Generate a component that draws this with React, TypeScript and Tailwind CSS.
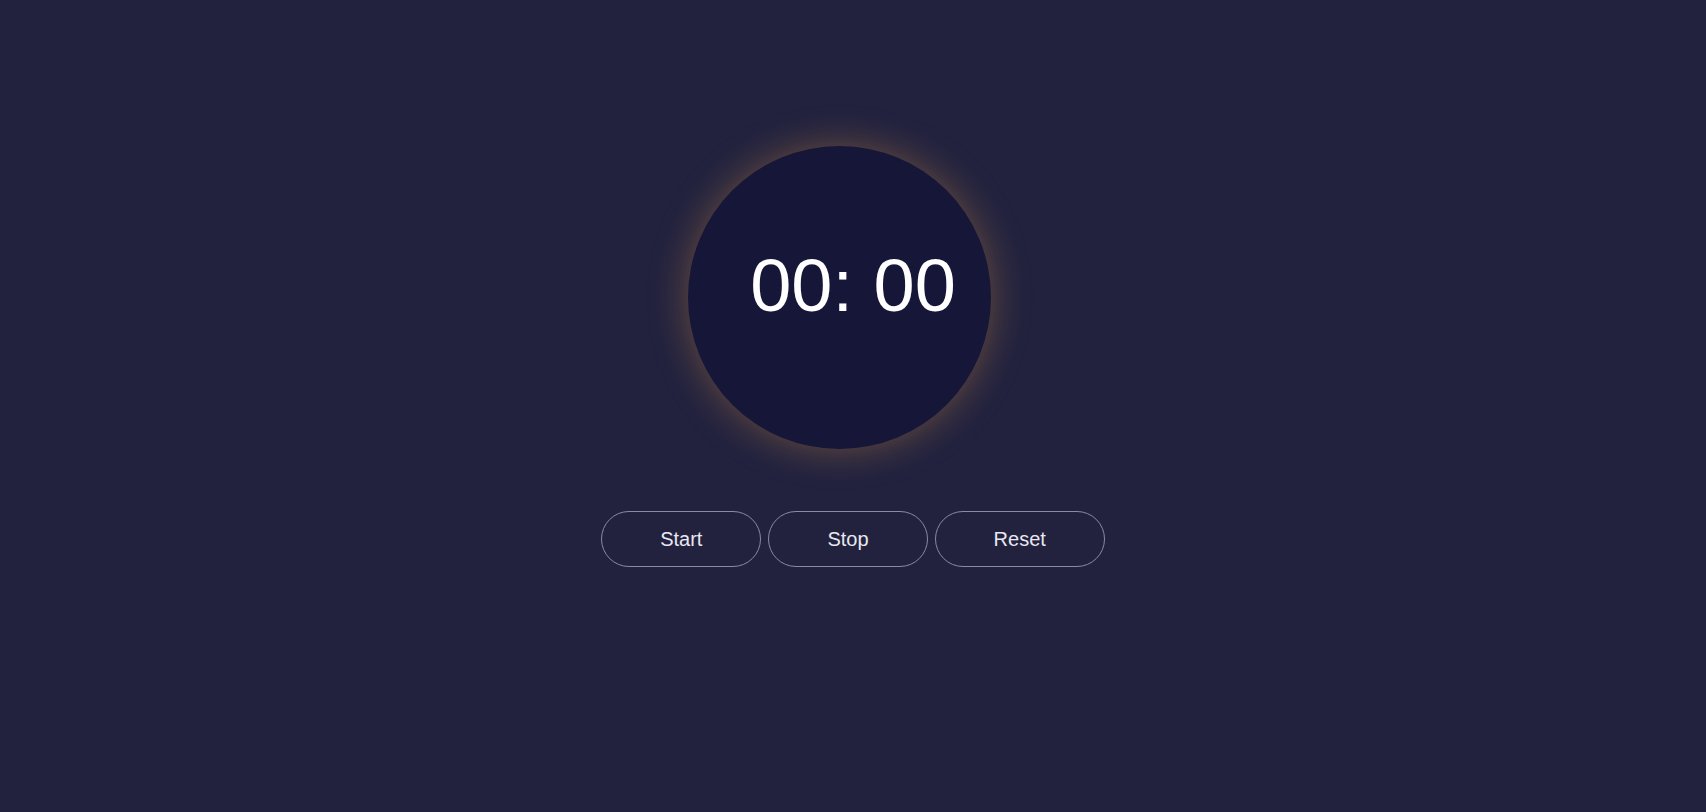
export default function App() {
  return (
    <div className="flex min-h-screen flex-col items-center bg-[#22223f] pt-[146px] font-['Liberation_Sans',Arial,sans-serif]">
      <div className="mr-[27px] flex h-[303px] w-[303px] items-center justify-center rounded-full bg-[#161639] pb-[24px] pl-[27px] shadow-[0_0_38px_rgba(240,160,60,0.35)]">
        <span className="text-[74px] leading-none text-white">00: 00</span>
      </div>
      <div className="mt-[62px] flex gap-[7px]">
        {["Start", "Stop", "Reset"].map((label) => (
          <button
            key={label}
            type="button"
            className="h-[56px] rounded-full border border-[#8a8aa6] px-[58px] text-[20px] text-[#e8e8f0]"
          >
            {label}
          </button>
        ))}
      </div>
    </div>
  );
}
